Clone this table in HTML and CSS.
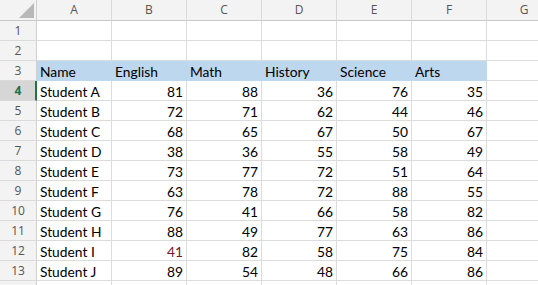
FILE: index.html
```html
<!DOCTYPE html>
<html>
<head>
<meta charset="utf-8">
<link rel="stylesheet" href="styles.css">
</head>
<body>
<div class="sheet">
  <div class="grid">
    <div class="corner"><svg class="tri" width="16" height="15" viewBox="0 0 16 15"><polygon points="0,15 15,15 15,0" fill="#b8b8b8"/></svg></div>
    <div class="ch">A</div><div class="ch">B</div><div class="ch">C</div><div class="ch">D</div><div class="ch">E</div><div class="ch">F</div><div class="ch">G</div>

    <div class="rh">1</div><div class="c"></div><div class="c"></div><div class="c"></div><div class="c"></div><div class="c"></div><div class="c"></div><div class="c"></div>
    <div class="rh">2</div><div class="c"></div><div class="c"></div><div class="c"></div><div class="c"></div><div class="c"></div><div class="c"></div><div class="c"></div>
    <div class="rh">3</div><div class="c hd">Name</div><div class="c hd">English</div><div class="c hd">Math</div><div class="c hd">History</div><div class="c hd">Science</div><div class="c hd">Arts</div><div class="c"></div>
    <div class="rh sel">4</div><div class="c">Student A</div><div class="c n">81</div><div class="c n">88</div><div class="c n">36</div><div class="c n">76</div><div class="c n">35</div><div class="c"></div>
    <div class="rh">5</div><div class="c">Student B</div><div class="c n">72</div><div class="c n">71</div><div class="c n">62</div><div class="c n">44</div><div class="c n">46</div><div class="c"></div>
    <div class="rh">6</div><div class="c">Student C</div><div class="c n">68</div><div class="c n">65</div><div class="c n">67</div><div class="c n">50</div><div class="c n">67</div><div class="c"></div>
    <div class="rh">7</div><div class="c">Student D</div><div class="c n">38</div><div class="c n">36</div><div class="c n">55</div><div class="c n">58</div><div class="c n">49</div><div class="c"></div>
    <div class="rh">8</div><div class="c">Student E</div><div class="c n">73</div><div class="c n">77</div><div class="c n">72</div><div class="c n">51</div><div class="c n">64</div><div class="c"></div>
    <div class="rh">9</div><div class="c">Student F</div><div class="c n">63</div><div class="c n">78</div><div class="c n">72</div><div class="c n">88</div><div class="c n">55</div><div class="c"></div>
    <div class="rh">10</div><div class="c">Student G</div><div class="c n">76</div><div class="c n">41</div><div class="c n">66</div><div class="c n">58</div><div class="c n">82</div><div class="c"></div>
    <div class="rh">11</div><div class="c">Student H</div><div class="c n">88</div><div class="c n">49</div><div class="c n">77</div><div class="c n">63</div><div class="c n">86</div><div class="c"></div>
    <div class="rh">12</div><div class="c">Student I</div><div class="c n red">41</div><div class="c n">82</div><div class="c n">58</div><div class="c n">75</div><div class="c n">84</div><div class="c"></div>
    <div class="rh">13</div><div class="c">Student J</div><div class="c n">89</div><div class="c n">54</div><div class="c n">48</div><div class="c n">66</div><div class="c n">86</div><div class="c"></div>
    <div class="rh"></div><div class="c"></div><div class="c"></div><div class="c"></div><div class="c"></div><div class="c"></div><div class="c"></div><div class="c"></div>
  </div>
</div>
</body>
</html>
```
FILE: styles.css
```css
html, body {
  margin: 0;
  padding: 0;
  background: #ffffff;
}
.sheet {
  width: 538px;
  height: 285px;
  overflow: hidden;
}
.grid {
  display: grid;
  grid-template-columns: 37px repeat(7, 75px);
  grid-template-rows: 21px repeat(14, 20px);
  width: 562px;
  font-family: Lato, "Liberation Sans", sans-serif;
  font-size: 13.8px;
  color: #000000;
}
.grid > div {
  box-sizing: border-box;
  overflow: hidden;
  white-space: nowrap;
}
.corner {
  background: #f3f3f3;
  border-right: 1px solid #d0d0d0;
  border-bottom: 1px solid #c8c8c8;
  display: flex;
  justify-content: flex-end;
  align-items: flex-start;
  padding: 3px 1px 0 0;
}
.tri {
  display: block;
}
.ch {
  background: #f3f3f3;
  border-right: 1px solid #dadada;
  border-bottom: 1px solid #c8c8c8;
  color: #555555;
  font-family: "Open Sans", "Noto Sans", sans-serif;
  font-size: 12px;
  text-align: center;
  line-height: 20px;
}
.rh {
  background: #f3f3f3;
  border-right: 1px solid #d0d0d0;
  border-bottom: 1px solid #dadada;
  color: #555555;
  font-family: "Open Sans", "Noto Sans", sans-serif;
  font-size: 12px;
  text-align: center;
  line-height: 20px;
}
.rh.sel {
  background: #d6d6d6;
  color: #217346;
  font-weight: 700;
  border-right: 2px solid #217346;
  padding-left: 1px;
}
.c {
  border-right: 1px solid #dcdcdc;
  border-bottom: 1px solid #dcdcdc;
  padding: 0 3px;
  line-height: 22px;
}
.c.n {
  text-align: right;
}
.c.hd {
  background: #bdd7ee;
  border-right-color: #bdd7ee;
  border-bottom-color: #bdd7ee;
}
.c.red {
  color: #6e1a2e;
}
```
